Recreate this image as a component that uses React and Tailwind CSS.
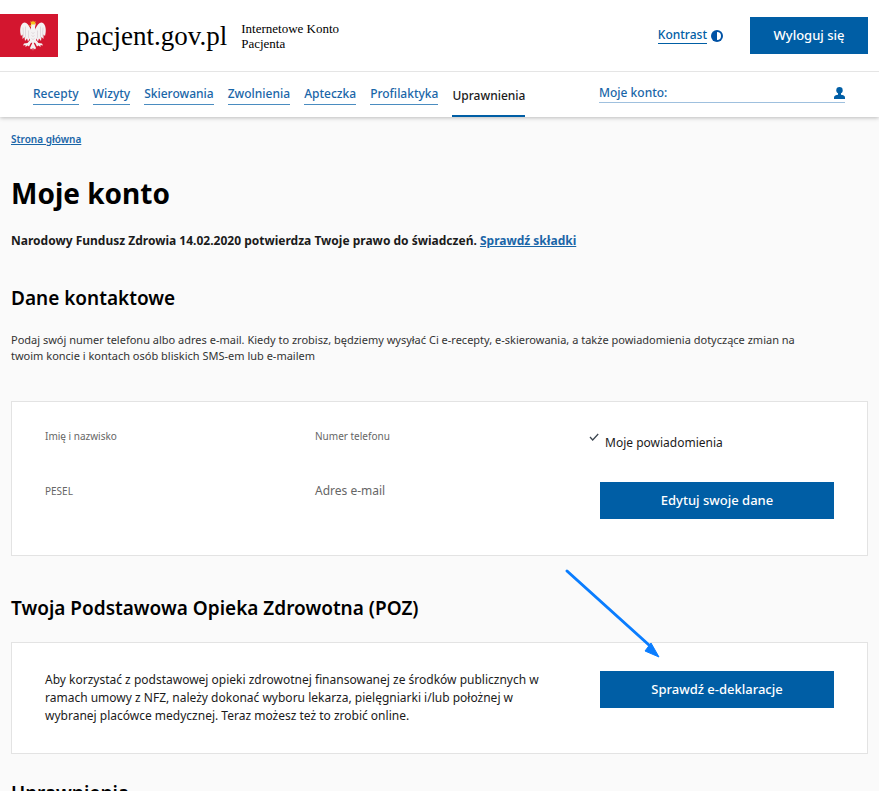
const navItems = ['Recepty', 'Wizyty', 'Skierowania', 'Zwolnienia', 'Apteczka', 'Profilaktyka'];

const Eagle = () => (
  <svg viewBox="0 0 56 62" className="w-7 h-8" aria-hidden="true">
    <g fill="#f4f2f3">
      <path d="M24 19C20 8 13 1 8 5c-6 5-7 15-4 26l3-3 0 9 4-4 1 8 4-5 2 6 5-8 2-8z" />
      <path d="M32 19C36 8 43 1 48 5c6 5 7 15 4 26l-3-3 0 9-4-4-1 8-4-5-2 6-5-8-2-8z" />
      <path d="M24 7c1-4 7-5 9-1 1 3-1 5-1 8l3 12-1 14-6 6-6-6-1-14 3-12z" />
      <path d="M23 38l-6 7-7 1-2 4 5-1 0 4 4-3 3 2 3-6 4-3z" />
      <path d="M33 38l6 7 7 1 2 4-5-1 0 4-4-3-3 2-3-6-4-3z" />
      <path d="M28 42l-6 13 2 3 3-3 1 6 1-6 3 3 2-3z" />
    </g>
    <g fill="none" stroke="#cdbfc5" strokeWidth="1">
      <path d="M8 14l1 18M13 12l0 22M19 20l0 15M48 14l-1 18M43 12l0 22M37 20l0 15" />
      <path d="M25 24l3 2 3-2M25 30l3 2 3-2M25 36l3 2 3-2" />
    </g>
    <path d="M23 1l3 2 2-3 2 3 3-2-1 7h-8z" fill="#f6c21c" />
    <path d="M25 9l-5 1 4 3z" fill="#f6c21c" />
  </svg>
);

const ContrastIcon = () => (
  <svg viewBox="0 0 12 12" className="w-3 h-3" aria-hidden="true">
    <circle cx="6" cy="6" r="6" fill="#0052a5" />
    <path d="M6 2a4 4 0 0 1 0 8z" fill="#fff" />
  </svg>
);

const UserIcon = () => (
  <svg viewBox="0 0 11 12" className="w-[11px] h-3" fill="#005ea5" aria-hidden="true">
    <circle cx="5.500" cy="3.300" r="3.200" />
    <path d="M0 12V10.500C0 8.800 2 8.200 4 7.800V6H7V7.800C9 8.200 11 8.800 11 10.500V12z" />
  </svg>
);

const CheckIcon = () => (
  <svg viewBox="0 0 10 8" className="w-[10px] h-2" fill="none" stroke="#3c4650" strokeWidth="1.3" aria-hidden="true">
    <path d="M1 4l2.700 3L9.200 1" />
  </svg>
);

const Arrow = () => (
  <svg viewBox="0 0 100 92" className="absolute right-[204px] -top-[76px] w-[100px] h-[92px] pointer-events-none" aria-hidden="true">
    <path d="M4 4L86 78" stroke="#0a7dff" strokeWidth="3" strokeLinecap="round" />
    <path d="M96 90L82 84 88 76z" fill="#0a7dff" stroke="#0a7dff" />
  </svg>
);

const ActionButton = ({ children }) => (
  <button type="button" className="w-full h-[37px] bg-[#005ea5] text-white text-[13px] font-medium">
    {children}
  </button>
);

const SectionTitle = ({ children }) => (
  <h2 className="text-[19px] leading-6 font-semibold text-black">{children}</h2>
);

const App = () => {
  return (
    <div className="min-h-screen bg-[#fafafa] text-[#1b1b1b] font-['Noto_Sans','Open_Sans',sans-serif]">
      <header className="bg-white shadow-[0_1px_4px_rgba(0,0,0,0.25)]">
        <div className="flex items-center h-[72px] pr-[11px] border-b border-[#e5e5e5]">
          <div className="flex items-center justify-end w-[58px] h-[43px] pr-[11px] bg-[#d3162f]">
            <Eagle />
          </div>
          <a href="#" className="ml-[18px] text-[27px] leading-8 text-black font-['Liberation_Serif',serif]">pacjent.gov.pl</a>
          <p className="ml-[14px] text-[13px] leading-[15px] text-black font-['Liberation_Serif',serif]">
            Internetowe Konto
            <br />
            Pacjenta
          </p>
          <button type="button" className="ml-auto flex items-center gap-1 text-[12px] leading-4 font-medium text-[#005ea5]">
            <span className="border-b border-[#005ea5]">Kontrast</span>
            <ContrastIcon />
          </button>
          <button type="button" className="ml-[27px] w-[118px] h-[37px] bg-[#005ea5] text-white text-[13px] font-medium">
            Wyloguj się
          </button>
        </div>

        <div className="flex justify-between h-[45px] pl-[33px] pr-[34px]">
          <nav className="flex gap-[14px] text-[12px] leading-5 font-medium">
            {navItems.map((item) => (
              <a key={item} href="#" className="self-start mt-3 border-b border-[#4a8cc0] text-[#1a66a8]">
                {item}
              </a>
            ))}
            <a href="#" aria-current="page" className="pt-[14px] border-b-2 border-[#005ea5]">
              Uprawnienia
            </a>
          </nav>
          <a
            href="#"
            className="self-start flex items-center justify-between w-[246px] h-[19px] mt-3 border-b border-[#9fc0de] text-[12px] leading-5 font-medium text-[#1a66a8]"
          >
            Moje konto:
            <UserIcon />
          </a>
        </div>
      </header>

      <main className="px-[11px] pt-[14px]">
        <a href="#" className="block w-fit text-[10px] leading-4 font-semibold text-[#1a66a8] underline">
          Strona główna
        </a>
        <h1 className="mt-[26px] text-[28px] leading-10 font-bold text-black">Moje konto</h1>
        <p className="mt-[18px] text-[12px] leading-5 font-bold">
          Narodowy Fundusz Zdrowia 14.02.2020 potwierdza Twoje prawo do świadczeń.{' '}
          <a href="#" className="text-[#1a66a8] underline">Sprawdź składki</a>
        </p>

        <section className="mt-[35px]">
          <SectionTitle>Dane kontaktowe</SectionTitle>
          <p className="mt-[22px] pr-12 text-[11px] leading-4 text-[#333]">
            Podaj swój numer telefonu albo adres e-mail. Kiedy to zrobisz, będziemy wysyłać Ci e-recepty,
            e-skierowania, a także powiadomienia dotyczące zmian na twoim koncie i kontach osób bliskich SMS-em lub
            e-mailem
          </p>
          <div className="grid grid-cols-[270fr_285fr_234px] mt-[37px] px-[33px] pt-[26px] pb-9 bg-white border border-[#e3e3e3]">
            <dl className="flex flex-col gap-[39px] text-[10px] leading-4 text-[#666]">
              <dt>Imię i nazwisko</dt>
              <dt>PESEL</dt>
            </dl>
            <dl className="flex flex-col gap-[39px] text-[10px] leading-4 text-[#666]">
              <dt>Numer telefonu</dt>
              <dt className="text-[12px]">Adres e-mail</dt>
            </dl>
            <div>
              <p className="flex gap-[6px] -ml-[11px] mt-[5px] mb-[29px] text-[12px] leading-5">
                <CheckIcon />
                Moje powiadomienia
              </p>
              <ActionButton>Edytuj swoje dane</ActionButton>
            </div>
          </div>
        </section>

        <section className="mt-10">
          <SectionTitle>Twoja Podstawowa Opieka Zdrowotna (POZ)</SectionTitle>
          <div className="relative flex justify-between items-start mt-[22px] px-[33px] pt-7 pb-7 bg-white border border-[#e3e3e3]">
            <p className="w-[510px] text-[12px] leading-[18px]">
              Aby korzystać z podstawowej opieki zdrowotnej finansowanej ze środków publicznych w ramach umowy z NFZ,
              należy dokonać wyboru lekarza, pielęgniarki i/lub położnej w wybranej placówce medycznej. Teraz możesz
              też to zrobić online.
            </p>
            <div className="w-[234px]">
              <ActionButton>Sprawdź e-deklaracje</ActionButton>
            </div>
            <Arrow />
          </div>
        </section>

        <section className="mt-[27px]">
          <SectionTitle>Uprawnienia</SectionTitle>
        </section>
      </main>
    </div>
  );
};

export default App;
